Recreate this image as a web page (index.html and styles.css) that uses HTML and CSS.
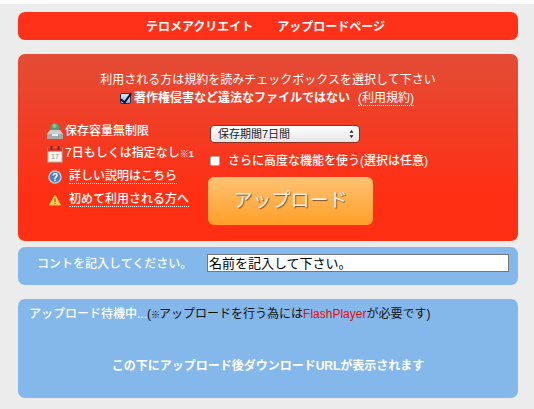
FILE: index.html
```html
<!DOCTYPE html>
<html lang="ja">
<head>
<meta charset="utf-8">
<title>テロメアクリエイト アップロードページ</title>
<link rel="stylesheet" href="styles.css">
</head>
<body>
<div class="topstrip"></div>
<main class="page">
  <header class="panel title">テロメアクリエイト　　アップロードページ</header>
  <section class="panel upload">
    <p class="notice">利用される方は規約を読みチェックボックスを選択して下さい</p>
    <div class="agree">
      <input type="checkbox" class="agree-box" checked>
      <b>著作権侵害など違法なファイルではない</b>
      <a class="link agree-link">(利用規約)</a>
    </div>
    <div class="columns">
      <ul class="features">
        <li class="feature">
          <svg class="icon" viewBox="0 0 18 18"><circle cx="9" cy="5.500" r="4.500" fill="#4a9a8a"/><path d="M6 3l3-1.500 2 3-3 2z" fill="#8cc872"/><path d="M4 8h10l3 4v5H1v-5z" fill="#c9cecd"/><path d="M1 12h16v5H1z" fill="#a3a9a9"/><path d="M6 12h6v2H6z" fill="#e8ecec"/></svg>
          <span>保存容量無制限</span>
        </li>
        <li class="feature">
          <svg class="icon" viewBox="0 0 18 18"><rect x="2" y="3" width="14" height="14" fill="#f6f4ee" stroke="#b9b4ad"/><rect x="2" y="2.500" width="14" height="4" fill="#d9362a"/><rect x="4.500" y="1" width="2" height="4" fill="#7a2a22"/><rect x="11.500" y="1" width="2" height="4" fill="#7a2a22"/><text x="9" y="14" font-size="7" text-anchor="middle" fill="#8a8f92" font-family="Liberation Sans">17</text></svg>
          <span>7日もしくは指定なし<b class="note">※1</b></span>
        </li>
        <li class="feature">
          <svg class="icon" viewBox="0 0 18 18"><circle cx="9" cy="9" r="6" fill="#4d7fb8" stroke="#b8cfe6" stroke-width="1.400"/><text x="9" y="12.500" font-size="10" font-weight="bold" text-anchor="middle" fill="#fff" font-family="Liberation Sans">?</text></svg>
          <a class="link pad">詳しい説明はこちら</a>
        </li>
        <li class="feature">
          <svg class="icon" viewBox="0 0 18 18"><path d="M9 4l5.500 10H3.500z" fill="#f1d04e" stroke="#e0bd50"/><rect x="8.400" y="7.500" width="1.200" height="3.500" fill="#8a6a20"/><rect x="8.400" y="11.800" width="1.200" height="1.200" fill="#8a6a20"/></svg>
          <a class="link pad">初めて利用される方へ</a>
        </li>
      </ul>
      <div class="options">
        <div class="select"><span>保存期間7日間</span><svg class="arrows" viewBox="0 0 6 10"><path d="M3 0l2.500 3.500h-5zM3 10L.5 6.500h5z" fill="#222"/></svg></div>
        <label class="advanced"><input type="checkbox" class="adv-box"><span>さらに高度な機能を使う(選択は任意)</span></label>
        <button class="upload-btn" type="button">アップロード</button>
      </div>
    </div>
  </section>
  <section class="panel name">
    <label class="name-label">コントを記入してください。</label>
    <input class="name-input" type="text" value="名前を記入して下さい。">
  </section>
  <section class="panel status">
    <p class="status-line"><span class="waiting">アップロード待機中...</span>(<span class="mark">※</span>アップロードを行う為には<span class="flash">FlashPlayer</span>が必要です)</p>
    <p class="result">この下にアップロード後ダウンロードURLが表示されます</p>
  </section>
</main>
</body>
</html>
```
FILE: styles.css
```css
* { box-sizing: border-box; }
html, body { margin: 0; padding: 0; }
body {
  background: #ececec;
  font-family: "Liberation Sans", "Noto Sans CJK JP", sans-serif;
  font-size: 12px;
  line-height: 18px;
  color: #fff;
  overflow: hidden;
}
p, ul { margin: 0; padding: 0; }
.topstrip { height: 4px; background: #fff; }
.page { width: 500px; margin: 8px 0 0 18px; display: flex; flex-direction: column; }
.panel { border-radius: 7px; }
.title {
  height: 28px;
  padding-right: 5px;
  background: #ff3118;
  font-weight: bold;
  text-align: center;
  line-height: 31px;
}
.upload {
  margin-top: 14px;
  height: 187px;
  padding-top: 17px;
  background: linear-gradient(#e44c35, #ff2f14 75%);
}
.notice { text-align: center; }
.agree { display: flex; justify-content: center; align-items: center; gap: 8px; height: 18px; padding-right: 2px; }
.agree b { margin-left: -5px; }
.agree-box {
  appearance: none;
  position: relative;
  margin: 0;
  width: 11px;
  height: 11px;
  border: 1px solid #2b3550;
  border-radius: 2px;
  background: linear-gradient(#dbe8f6, #8fb8e6);
}
.agree-box::after {
  content: "";
  position: absolute;
  left: 2px;
  top: -3px;
  width: 4px;
  height: 10px;
  border: solid #0c1428;
  border-width: 0 2px 2px 0;
  transform: rotate(35deg);
}
.link { color: #fff; border-bottom: 1px dotted #fff; line-height: 14px; }
.columns { display: flex; margin-top: 12px; padding-left: 28px; }
.features { list-style: none; width: 164px; display: flex; flex-direction: column; }
.feature { display: flex; align-items: center; height: 23px; gap: 1px; font-weight: 500; }
.icon { width: 18px; height: 18px; flex: none; }
.note { font-size: 9px; }
.pad { margin-left: 4px; }
.options { display: flex; flex-direction: column; align-items: flex-start; padding-top: 6px; }
.select {
  width: 150px;
  height: 18px;
  padding: 0 5px 0 7px;
  display: flex;
  align-items: center;
  justify-content: space-between;
  border-radius: 4px;
  border: 1px solid #8c3020;
  background: linear-gradient(#fff, #e6e6e6);
  color: #222;
  font-size: 11px;
}
.arrows { width: 5px; height: 8px; }
.advanced { display: flex; align-items: center; gap: 8px; margin-top: 9px; font-weight: 500; }
.adv-box {
  appearance: none;
  margin: 0;
  width: 10px;
  height: 10px;
  border: 1px solid #b8a8a4;
  border-radius: 2px;
  background: #fff;
}
.upload-btn {
  width: 165px;
  height: 48px;
  margin: 7px 0 0 -2px;
  padding: 0 0 6px;
  border: 0;
  border-radius: 6px;
  background: linear-gradient(#ffc272, #ff9f28);
  color: #f6efe4;
  font: 400 19px "Noto Sans CJK JP", sans-serif;
  text-shadow: 1px 1px 1px #7a5a30;
}
.name {
  margin-top: 6px;
  height: 38px;
  padding: 7px 9px 0 19px;
  background: #84b7ea;
  display: flex;
  align-items: flex-start;
}
.name-label { width: 170px; flex: none; font-weight: 500; padding-top: 1px; }
.name-input {
  flex: 1;
  min-width: 0;
  height: 18px;
  padding: 0 1px 2px;
  border: 1px solid #777;
  border-radius: 0;
  background: #fff;
  color: #000;
  font: 13px "Noto Sans CJK JP", sans-serif;
}
.status {
  margin-top: 14px;
  height: 99px;
  padding: 6px 11px 0;
  background: #84b7ea;
}
.status-line { color: #111; white-space: nowrap; }
.waiting { color: #fff; font-weight: 500; }
.mark { font-size: 9px; margin-right: -1px; color: #111; }
.flash { color: #e01010; }
.result { margin-top: 33px; text-align: center; font-weight: bold; }
```
